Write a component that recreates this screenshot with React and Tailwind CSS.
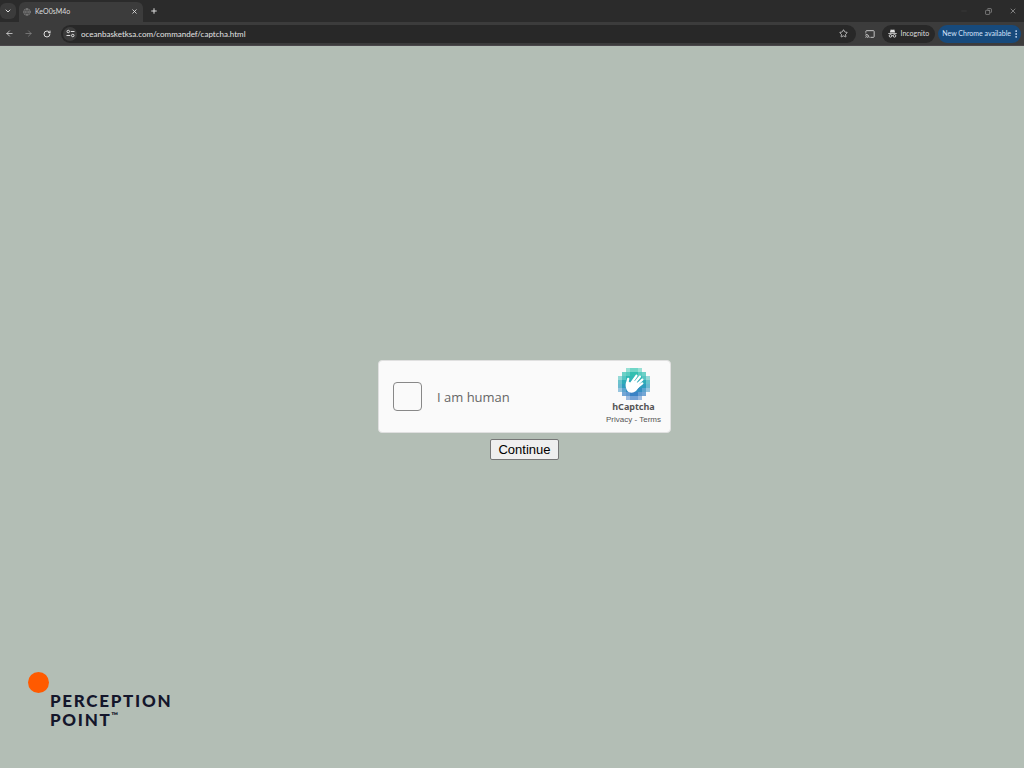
import { ArrowLeft, ArrowRight, Cast, ChevronDown, Copy, EllipsisVertical, Globe, Minus, Plus, RotateCw, Star, X } from "lucide-react";

// 8x8 opacity map of the pixel badge, top row first
const CELLS = [
  [0, 0, 0.5, 0.7, 0.7, 0.5, 0, 0],
  [0, 0.7, 0.8, 1, 1, 0.8, 0.7, 0],
  [0.5, 0.8, 1, 1, 1, 1, 0.8, 0.5],
  [0.7, 1, 1, 1, 1, 1, 1, 0.7],
  [0.7, 1, 1, 1, 1, 1, 1, 0.7],
  [0.5, 0.8, 1, 1, 1, 1, 0.8, 0.5],
  [0, 0.7, 0.8, 1, 1, 0.8, 0.7, 0],
  [0, 0, 0.5, 0.7, 0.7, 0.5, 0, 0],
];
const ROW_COLORS = ["#35c6b0", "#30bfb0", "#30b8b4", "#2eabb8", "#2f9dbe", "#348fc3", "#3a82c5", "#3b7cc6"];

function CaptchaLogo() {
  return (
    <svg width="32" height="32" viewBox="0 0 32 32" aria-hidden="true">
      <g shapeRendering="crispEdges">
        {CELLS.map((row, y) =>
          row.map((o, x) => (o ? <rect key={x + "-" + y} x={x * 4} y={y * 4} width="4" height="4" fill={ROW_COLORS[y]} opacity={o} /> : null))
        )}
      </g>
      <path d="M7.6 17 Q7.4 14 9.5 13 L13 15 L15.5 12.5 L21 15.5 L21.5 18.5 L18 23 Q14.5 26 10.5 24 Q7.6 21.5 7.6 17Z" fill="#fff" />
      <path d="M10.2 10.8 L9 16 M13 15.5 L18.4 7.8 M15 17 L22 8.6 M17 18.5 L24.3 11.6 M17.5 20.5 L24.3 15.4" fill="none" stroke="#fff" strokeWidth="2.3" strokeLinecap="round" />
    </svg>
  );
}

function IncognitoIcon() {
  return (
    <svg width="9" height="9" viewBox="0 0 18 18" fill="#e3e3e3" aria-hidden="true">
      <path d="M5.4 1 L7.5 1.7 H10.5 L12.6 1 L14.3 7 H3.7Z M0.5 7.8 H17.5 V9.6 H0.5Z" />
      <path d="M8 13.5 Q9 12.8 10 13.5" fill="none" stroke="#e3e3e3" strokeWidth="1.5" />
      <circle cx="5" cy="13.7" r="2.6" fill="none" stroke="#e3e3e3" strokeWidth="1.8" />
      <circle cx="13" cy="13.7" r="2.6" fill="none" stroke="#e3e3e3" strokeWidth="1.8" />
    </svg>
  );
}

function SiteSettingsIcon() {
  return (
    <svg width="9" height="9" viewBox="0 0 18 18" fill="none" stroke="#dedede" strokeWidth="2" aria-hidden="true">
      <circle cx="4.5" cy="5" r="2.5" />
      <path d="M9.5 5 H17 M1 13 H8.5" />
      <circle cx="13.5" cy="13" r="2.5" />
    </svg>
  );
}

function TabStrip() {
  return (
    <div className="flex h-[22px] items-end justify-between bg-[#2b2b2b] text-[#dedede]">
      <div className="flex items-end">
        <button aria-label="Search tabs" className="mb-[3px] mr-[3px] flex h-4 w-4 items-center justify-center rounded-md bg-[#3b3b3b]"><ChevronDown size={8} strokeWidth={3} /></button>
        <div className="flex h-5 w-[124px] items-center rounded-t-md bg-[#3c3c3c] px-1 pb-px">
          <Globe size={8} className="mr-1 text-[#888]" />
          <span className="flex-1 text-[7px]">KeO0sM4o</span>
          <button aria-label="Close tab" className="mr-px"><X size={7} strokeWidth={3} /></button>
        </div>
        <button aria-label="New tab" className="mb-[7px] ml-[7px]"><Plus size={8} strokeWidth={3} /></button>
      </div>
      <div className="mb-[7px] flex items-center gap-[17px] pr-[7px] text-[#aaa]">
        <button aria-label="Minimize"><Minus size={8} strokeWidth={1} className="text-[#555]" /></button>
        <button aria-label="Restore"><Copy size={7} className="-scale-x-100" /></button>
        <button aria-label="Close"><X size={8} strokeWidth={2} /></button>
      </div>
    </div>
  );
}

function Toolbar() {
  return (
    <div className="flex h-6 items-center border-b border-[#4b474b] bg-[#3c3c3c] pl-[5px] pr-[3px] text-[#dedede]">
      <div className="flex w-14 items-center gap-[10px]">
        <button aria-label="Back"><ArrowLeft size={9} strokeWidth={2} /></button>
        <button aria-label="Forward" className="text-[#858585]"><ArrowRight size={9} strokeWidth={2} /></button>
        <button aria-label="Reload"><RotateCw size={8} strokeWidth={3} /></button>
      </div>
      <div className="flex h-[18px] flex-1 items-center rounded-full bg-[#282828] pl-[2px] pr-2">
        <span className="mr-1 flex h-[14px] w-[14px] items-center justify-center rounded-full bg-[#3c3c3c]"><SiteSettingsIcon /></span>
        <input aria-label="Address" className="min-w-0 flex-1 bg-transparent text-[8px] text-[#e3e3e3] outline-none" defaultValue="oceanbasketksa.com/commandef/captcha.html" />
        <button aria-label="Bookmark"><Star size={9} strokeWidth={2} /></button>
      </div>
      <button aria-label="Cast" className="ml-[9px] mr-[7px]"><Cast size={10} strokeWidth={2} /></button>
      <button className="flex h-[18px] items-center gap-1 rounded-full bg-[#282828] px-[6px] text-[7px]"><IncognitoIcon />Incognito</button>
      <button className="ml-[3px] flex h-[18px] items-center rounded-full bg-[#174a7c] pl-1 text-[7px] text-[#d3e3fd]">New Chrome available<EllipsisVertical size={10} strokeWidth={2} /></button>
    </div>
  );
}

export default function App() {
  return (
    <div className="flex min-h-screen flex-col bg-[#b3beb5] font-['Open_Sans',sans-serif]">
      <header className="font-['Lato',sans-serif]">
        <TabStrip />
        <Toolbar />
      </header>
      <main className="grid flex-1 grid-rows-[1fr_auto_1fr] pt-[6px]">
        <form className="row-start-2 flex flex-col items-center gap-[6px] pl-[25px]" onSubmit={(e) => e.preventDefault()}>
          <div className="flex h-[73px] w-[293px] items-center rounded-[4px] border border-[#e0e0e0] bg-[#fafafa] pl-[14px] pr-[9px]">
            <input id="human" type="checkbox" className="h-[29px] w-[29px] appearance-none rounded-[4px] border border-[#888] bg-[#fafafa] checked:bg-[#00838f]" />
            <label htmlFor="human" className="ml-[15px] flex-1 pt-[2px] text-[13px] text-[#666]">I am human</label>
            <div className="flex flex-col items-center pt-px text-[#555]">
              <CaptchaLogo />
              <span className="font-['Noto_Sans',sans-serif] text-[9px] leading-[14px] font-bold">hCaptcha</span>
              <span className="font-['Liberation_Sans',sans-serif] text-[8px] leading-[12px]"><a href="#privacy">Privacy</a> - <a href="#terms">Terms</a></span>
            </div>
          </div>
          <button className="h-[21px] rounded-[2px] border border-[#767676] bg-[#efefef] px-[7px] font-['Liberation_Sans',sans-serif] text-[13px] leading-[19px] text-black">Continue</button>
        </form>
        <div className="row-start-3 self-end pb-[39px] pl-7">
          <svg className="-mb-[2px]" width="21" height="21" viewBox="0 0 21 21" aria-hidden="true"><circle cx="10.5" cy="10.5" r="10.5" fill="#ff5a00" /></svg>
          <div className="pl-[22px] font-['Lato',sans-serif] text-[17px] leading-[19px] font-black tracking-widest text-[#14162b]">
            <p>PERCEPTION</p>
            <p className="flex items-start">POINT<span className="text-[9px] leading-[12px] tracking-normal">™</span></p>
          </div>
        </div>
      </main>
    </div>
  );
}
